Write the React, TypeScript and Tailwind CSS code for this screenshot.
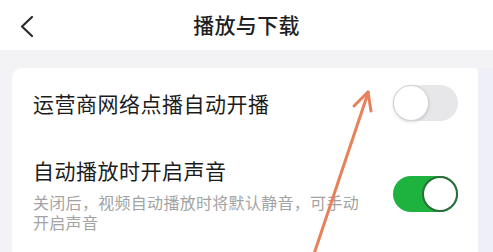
import React from 'react';

function Toggle({ on }: { on: boolean }) {
  if (on) {
    return (
      <div className="w-[65px] h-[36px] rounded-full bg-[#1db33e] relative shrink-0">
        <div className="absolute right-0 top-0 w-[36px] h-[36px] rounded-full bg-white border-[2px] border-[#2b6e3c]" />
      </div>
    );
  }
  return (
    <div className="w-[65px] h-[36px] rounded-full bg-[#e7e7e9] relative shrink-0">
      <div className="absolute left-0 top-0 w-[36px] h-[36px] rounded-full bg-white border border-[#d3d3d6] shadow-[0_1px_3px_rgba(0,0,0,0.15)]" />
    </div>
  );
}

export default function App() {
  return (
    <div
      className="relative w-[493px] h-[252px] overflow-hidden bg-[#f3f3f6]"
      style={{ fontFamily: '"Noto Sans CJK SC", "Noto Sans", sans-serif' }}
    >
      {/* header */}
      <div className="relative h-[50px] bg-white flex items-center justify-center">
        <svg className="absolute left-[19px] top-[15px]" width="16" height="23" viewBox="0 0 16 23">
          <path d="M13 2 L3 11.5 L13 21" fill="none" stroke="#2a2a2a" strokeWidth="2.2" strokeLinecap="round" strokeLinejoin="round" />
        </svg>
        <div className="text-[21px] font-medium text-[#1f1f1f] tracking-[0.3px]">播放与下载</div>
      </div>

      <div className="flex pt-[18px]">
        <div className="w-[12px] shrink-0 bg-[#f2f2f7]" />
        <div className="w-[466px] bg-white rounded-tl-[10px] rounded-tr-[4px] pl-[21px] pr-[20px] pt-[17px] h-[200px]">
          <div className="flex items-center justify-between h-[36px]">
            <div className="text-[21px] leading-[28px] text-[#1c1c1c] tracking-[0.5px]">运营商网络点播自动开播</div>
            <Toggle on={false} />
          </div>
          <div className="flex items-center justify-between mt-[35px]">
            <div>
              <div className="text-[21px] leading-[28px] text-[#1c1c1c] tracking-[0.5px]">自动播放时开启声音</div>
              <div className="mt-[8px] w-[330px] text-[16px] leading-[20px] text-[#a3a3a3] tracking-[0.3px]">
                关闭后，视频自动播放时将默认静音，可手动开启声音
              </div>
            </div>
            <Toggle on={true} />
          </div>
        </div>
        <div className="flex-1 bg-[#efeff8]" />
      </div>

      {/* annotation arrow */}
      <svg className="absolute left-0 top-0 pointer-events-none" width="493" height="252" viewBox="0 0 493 252">
        <g stroke="#e8805a" strokeWidth="3" strokeLinecap="round" fill="none">
          <line x1="314" y1="254" x2="368" y2="93" />
          <line x1="368" y1="92" x2="354" y2="106" />
          <line x1="368" y1="92" x2="371" y2="111" />
        </g>
      </svg>
    </div>
  );
}
